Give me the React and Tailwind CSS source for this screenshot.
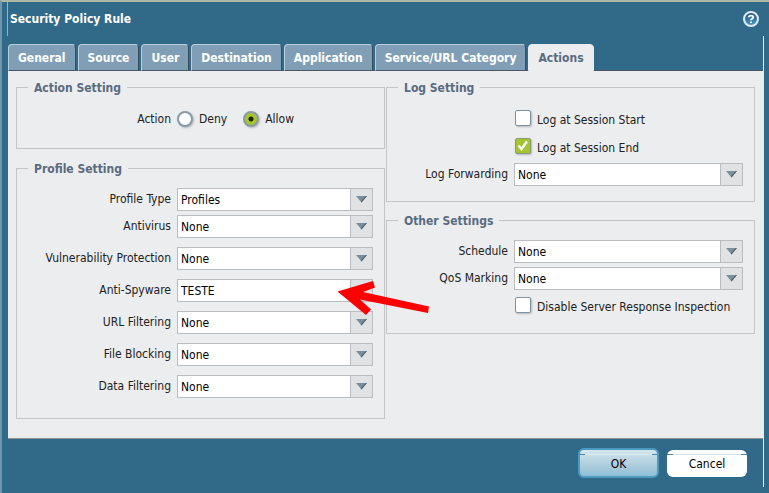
import { useState } from 'react';

const TABS = ['General', 'Source', 'User', 'Destination', 'Application', 'Service/URL Category', 'Actions'];

function Tab({ label, active, onClick }) {
  return (
    <button
      type="button"
      role="tab"
      aria-selected={active}
      onClick={onClick}
      className={`h-[27px] rounded-t px-[9px] font-bold whitespace-nowrap border ${
        active
          ? 'bg-[#ebedef] text-[#5a6b80] border-[#ebedef]'
          : 'bg-[#809fb6] text-white border-t-[#b9cfdd] border-l-[#b9cfdd] border-r-[#3e4b58] border-b-[#4c5663]'
      }`}
    >
      {label}
    </button>
  );
}

function Section({ title, className, children }) {
  return (
    <fieldset className={`min-w-0 border border-[#c3c6c9] pr-[11px] ${className || ''}`}>
      <legend className="ml-[11px] h-4 px-[6px] pt-px font-bold leading-4 text-[#5a6b80]">{title}</legend>
      {children}
    </fieldset>
  );
}

function ComboBox({ id, label, value, labelWidth, children }) {
  return (
    <div className="flex gap-[6px]">
      <label htmlFor={id} className={`${labelWidth} shrink-0 text-right leading-[22px] whitespace-nowrap`}>{label}</label>
      <div className="relative grid h-[23px] min-w-0 flex-1">
        <select
          id={id}
          defaultValue={value}
          className="col-start-1 row-start-1 w-full appearance-none border border-[#b9bcc0] bg-white pt-px pl-[3px] pr-6 text-black"
        >
          <option>{value}</option>
        </select>
        <span className="pointer-events-none col-start-1 row-start-1 flex w-[23px] items-center justify-center justify-self-end border border-[#b9bcc0] bg-[#e1e2e3]">
          <svg width="11" height="7" viewBox="0 0 11 7">
            <path d="M0 0H11L5.5 6.5Z" fill="#7b8e9a" />
            <path d="M11 0L5.5 6.5L4.8 5.6L9.8 0Z" fill="#4d6072" />
          </svg>
        </span>
        {children}
      </div>
    </div>
  );
}

function RadioOption({ label, checked, onChange }) {
  return (
    <label className="flex items-center gap-[6px]">
      <input
        type="radio"
        name="action"
        checked={checked}
        onChange={onChange}
        className="size-4 appearance-none rounded-full border-2 border-[#8a9aa5] bg-white shadow-[1px_1px_2px_#b5b8ba] checked:bg-[radial-gradient(circle,#1c2408_0_2px,#a6c62e_3px)]"
      />
      {label}
    </label>
  );
}

function CheckOption({ label, defaultChecked, className }) {
  return (
    <label className={`ml-[128px] flex h-4 gap-[6px] whitespace-nowrap ${className}`}>
      <span className="grid size-4 shrink-0">
        <input
          type="checkbox"
          defaultChecked={defaultChecked}
          className="peer col-start-1 row-start-1 size-4 appearance-none rounded-xs border border-[#7f93a3] bg-white shadow-[1px_1px_2px_#b5b8ba] checked:border-[#8a9a78] checked:bg-[#a4c434]"
        />
        <svg viewBox="0 0 16 16" className="pointer-events-none invisible col-start-1 row-start-1 size-4 peer-checked:visible">
          <path d="M3.5 7.5L6.5 11L12 3.5" fill="none" stroke="#fff" strokeWidth="2.4" />
        </svg>
      </span>
      <span className="leading-5">{label}</span>
    </label>
  );
}

function RedArrow() {
  return (
    <svg width="93" height="37" viewBox="0 0 93 37" className="pointer-events-none absolute -right-[57px] top-0 z-10">
      <path d="M0.5 12.5L36 2L38 8.5L26 13L92 27.5L91 34L23 20.5L34 30.5L29 36Z" fill="#fe0000" />
    </svg>
  );
}

function HelpIcon() {
  return (
    <svg width="16" height="16" viewBox="0 0 16 16">
      <defs>
        <linearGradient id="help-fill" x1="0" y1="0" x2="0" y2="1">
          <stop offset="0" stopColor="#1f5580" />
          <stop offset="1" stopColor="#4f9cc6" />
        </linearGradient>
      </defs>
      <circle cx="8" cy="8" r="7" fill="url(#help-fill)" stroke="#dfeaf5" strokeWidth="2" />
      <path d="M5.8 6.3C5.9 4 10.2 4 10.2 6.2C10.2 7.7 8 7.6 8 9.2M8 10.4V12" fill="none" stroke="#fff" strokeWidth="1.8" />
    </svg>
  );
}

export default function App() {
  const [tab, setTab] = useState('Actions');
  const [action, setAction] = useState('Allow');

  return (
    <div className="flex min-h-screen flex-col border-t-2 border-l-2 border-t-[#adb9a5] border-l-[#6f96ad] bg-[#316a89] px-[5px] font-['DejaVu_Sans_Condensed','DejaVu_Sans',sans-serif] text-[12px] text-[#222]">
      {/* Title bar */}
      <header className="flex h-[34px] items-center justify-between border-l border-[#9fb0b0] pr-[5px] pl-[2px]">
        <h1 className="font-bold text-white">Security Policy Rule</h1>
        <button type="button" aria-label="Help">
          <HelpIcon />
        </button>
      </header>

      <div className="flex flex-1 flex-col border-r border-[#e6eaec] pl-px">
        <div role="tablist" className="flex gap-[2px] border-b border-[#4c5663] pt-2">
          {TABS.map((name) => (
            <div key={name} className="-mb-px">
              <Tab label={name} active={name === tab} onClick={() => setTab(name)} />
            </div>
          ))}
        </div>

        <main className="grid flex-1 grid-cols-2 gap-px border-b border-[#8f8f8f] bg-[#ebedef] px-2 pt-2">
          <div>
            <Section title="Action Setting">
              <div className="flex items-center gap-[6px] pt-[15px] pb-5">
                <span className="w-[154px] text-right">Action</span>
                <div className="flex h-4 gap-4">
                  <RadioOption label="Deny" checked={action === 'Deny'} onChange={() => setAction('Deny')} />
                  <RadioOption label="Allow" checked={action === 'Allow'} onChange={() => setAction('Allow')} />
                </div>
              </div>
            </Section>

            <Section title="Profile Setting" className="mt-[11px]">
              <div className="flex flex-col gap-[9px] pt-3 pb-5">
                <div className="flex flex-col gap-1">
                  <ComboBox id="profile-type" label="Profile Type" value="Profiles" labelWidth="w-[154px]" />
                  <ComboBox id="antivirus" label="Antivirus" value="None" labelWidth="w-[154px]" />
                </div>
                <ComboBox id="vulnerability" label="Vulnerability Protection" value="None" labelWidth="w-[154px]" />
                <ComboBox id="anti-spyware" label="Anti-Spyware" value="TESTE" labelWidth="w-[154px]">
                  <RedArrow />
                </ComboBox>
                <ComboBox id="url-filtering" label="URL Filtering" value="None" labelWidth="w-[154px]" />
                <ComboBox id="file-blocking" label="File Blocking" value="None" labelWidth="w-[154px]" />
                <ComboBox id="data-filtering" label="Data Filtering" value="None" labelWidth="w-[154px]" />
              </div>
            </Section>
          </div>

          <div>
            <Section title="Log Setting">
              <div className="py-[15px]">
                <CheckOption label="Log at Session Start" className="mb-3" />
                <CheckOption label="Log at Session End" className="mb-[9px]" defaultChecked />
                <ComboBox id="log-forwarding" label="Log Forwarding" value="None" labelWidth="w-[121px]" />
              </div>
            </Section>

            <Section title="Other Settings" className="mt-[10px]">
              <div className="flex flex-col gap-1 pt-3 pb-5">
                <ComboBox id="schedule" label="Schedule" value="None" labelWidth="w-[121px]" />
                <ComboBox id="qos-marking" label="QoS Marking" value="None" labelWidth="w-[121px]" />
                <CheckOption label="Disable Server Response Inspection" className="mt-[3px]" />
              </div>
            </Section>
          </div>
        </main>

        {/* Dialog buttons */}
        <footer className="flex h-12 items-center justify-end gap-2 pr-4">
          <button
            type="button"
            className="flex h-[30px] w-[81px] flex-col rounded-md border-2 border-[#4d9ac0] bg-linear-to-b from-[#d3e6ef] via-[#b4d0de] to-[#8fbfd6] pt-1 text-black"
          >
            <span className="h-px w-full border-x-5 border-[#4688a8] bg-[#dcebf2]" />
            <span className="w-full">OK</span>
          </button>
          <button type="button" className="flex h-[27px] w-20 flex-col rounded-md bg-white pt-1 text-black">
            <span className="h-px w-full border-x-6 border-[#54839c] bg-[#d5e0e7]" />
            <span className="w-full">Cancel</span>
          </button>
        </footer>
      </div>
      <div className="h-[6px]" />
    </div>
  );
}
